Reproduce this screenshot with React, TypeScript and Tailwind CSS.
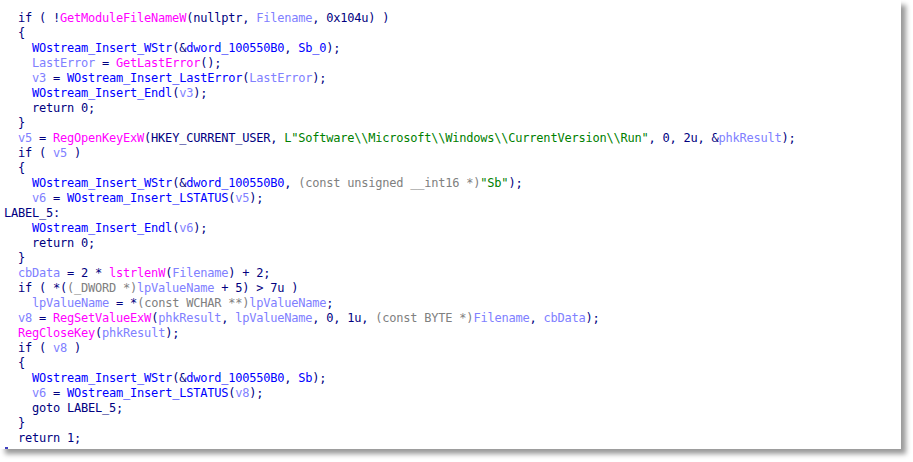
type Kind = 'n' | 'f' | 'b' | 'v' | 's' | 'c';
type Seg = [Kind, string];

const kindClass: Record<Kind, string> = {
  n: 'text-[#000080]',
  f: 'text-[#ff00ff]',
  b: 'text-[#0000ff]',
  v: 'text-[#8080ff]',
  s: 'text-[#008000]',
  c: 'text-[#808080]',
};

// pseudocode lines, leading spaces are the IDA indent
const lines: Seg[][] = [
  [['n', '  if ( !'], ['f', 'GetModuleFileNameW'], ['n', '(nullptr, '], ['v', 'Filename'], ['n', ', 0x104u) )']],
  [['n', '  {']],
  [['n', '    '], ['b', 'WOstream_Insert_WStr'], ['n', '(&'], ['b', 'dword_100550B0'], ['n', ', '], ['b', 'Sb_0'], ['n', ');']],
  [['n', '    '], ['v', 'LastError'], ['n', ' = '], ['f', 'GetLastError'], ['n', '();']],
  [['n', '    '], ['v', 'v3'], ['n', ' = '], ['b', 'WOstream_Insert_LastError'], ['n', '('], ['v', 'LastError'], ['n', ');']],
  [['n', '    '], ['b', 'WOstream_Insert_Endl'], ['n', '('], ['v', 'v3'], ['n', ');']],
  [['n', '    return 0;']],
  [['n', '  }']],
  [
    ['n', '  '],
    ['v', 'v5'],
    ['n', ' = '],
    ['f', 'RegOpenKeyExW'],
    ['n', '(HKEY_CURRENT_USER, '],
    ['s', 'L"Software\\\\Microsoft\\\\Windows\\\\CurrentVersion\\\\Run"'],
    ['n', ', 0, 2u, &'],
    ['v', 'phkResult'],
    ['n', ');'],
  ],
  [['n', '  if ( '], ['v', 'v5'], ['n', ' )']],
  [['n', '  {']],
  [
    ['n', '    '],
    ['b', 'WOstream_Insert_WStr'],
    ['n', '(&'],
    ['b', 'dword_100550B0'],
    ['n', ', '],
    ['c', '(const unsigned __int16 *)'],
    ['s', '"Sb"'],
    ['n', ');'],
  ],
  [['n', '    '], ['v', 'v6'], ['n', ' = '], ['b', 'WOstream_Insert_LSTATUS'], ['n', '('], ['v', 'v5'], ['n', ');']],
  [['n', 'LABEL_5:']],
  [['n', '    '], ['b', 'WOstream_Insert_Endl'], ['n', '('], ['v', 'v6'], ['n', ');']],
  [['n', '    return 0;']],
  [['n', '  }']],
  [['n', '  '], ['v', 'cbData'], ['n', ' = 2 * '], ['f', 'lstrlenW'], ['n', '('], ['v', 'Filename'], ['n', ') + 2;']],
  [['n', '  if ( *('], ['c', '(_DWORD *)'], ['v', 'lpValueName'], ['n', ' + 5) > 7u )']],
  [['n', '    '], ['v', 'lpValueName'], ['n', ' = *'], ['c', '(const WCHAR **)'], ['v', 'lpValueName'], ['n', ';']],
  [
    ['n', '  '],
    ['v', 'v8'],
    ['n', ' = '],
    ['f', 'RegSetValueExW'],
    ['n', '('],
    ['v', 'phkResult'],
    ['n', ', '],
    ['v', 'lpValueName'],
    ['n', ', 0, 1u, '],
    ['c', '(const BYTE *)'],
    ['v', 'Filename'],
    ['n', ', '],
    ['v', 'cbData'],
    ['n', ');'],
  ],
  [['n', '  '], ['f', 'RegCloseKey'], ['n', '('], ['v', 'phkResult'], ['n', ');']],
  [['n', '  if ( '], ['v', 'v8'], ['n', ' )']],
  [['n', '  {']],
  [['n', '    '], ['b', 'WOstream_Insert_WStr'], ['n', '(&'], ['b', 'dword_100550B0'], ['n', ', '], ['b', 'Sb'], ['n', ');']],
  [['n', '    '], ['v', 'v6'], ['n', ' = '], ['b', 'WOstream_Insert_LSTATUS'], ['n', '('], ['v', 'v8'], ['n', ');']],
  [['n', '    goto LABEL_5;']],
  [['n', '  }']],
  [['n', '  return 1;']],
];

function CodeLine({ segs }: { segs: Seg[] }) {
  return (
    <div className="h-[15px] leading-[15px] whitespace-pre">
      {segs.map((seg, i) => (
        <span key={i} className={kindClass[seg[0]]}>
          {seg[1]}
        </span>
      ))}
    </div>
  );
}

export default function App() {
  return (
    <div className="w-[913px] h-[462px] bg-white overflow-hidden">
      <div className="w-[901px] h-[449px] bg-white overflow-hidden shadow-[5px_5px_5px_rgba(0,0,0,0.4)]">
        <div className="pt-[11px] pl-[4px] font-['DejaVu_Sans_Mono',monospace] text-[12px] tracking-[-0.22px]">
          {lines.map((segs, i) => (
            <CodeLine key={i} segs={segs} />
          ))}
          {/* top of the next (cut) line peeking out */}
          <div className="mt-[1px] ml-[1px] w-[3px] h-[2px] bg-[#4040c0]" />
        </div>
      </div>
    </div>
  );
}
